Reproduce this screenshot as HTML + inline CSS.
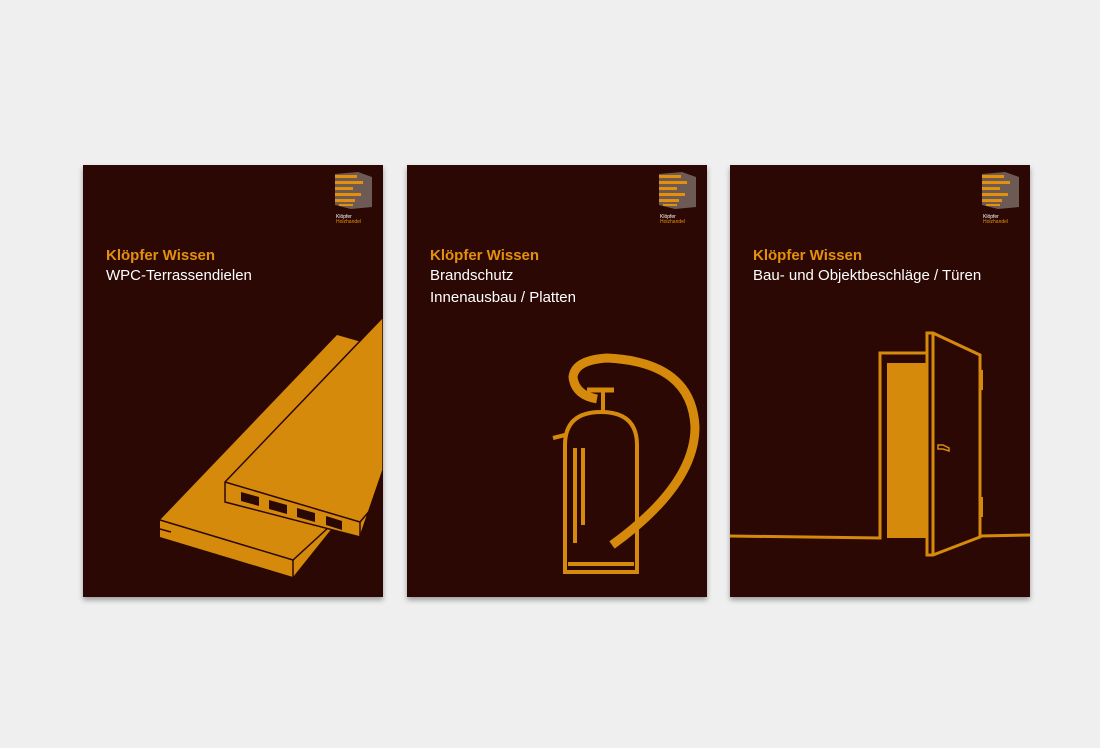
<!DOCTYPE html>
<html><head><meta charset="utf-8"><style>
body{margin:0;width:1100px;height:748px;background:#efefef;overflow:hidden;position:relative;font-family:"Liberation Sans",sans-serif}
.c{position:absolute;top:165px;width:300px;height:432px;background:#2b0803;box-shadow:0 3px 5px rgba(0,0,0,.35)}
.c svg{position:absolute;left:0;top:0}
.t{position:absolute;left:23px;font-size:15px;line-height:22px;color:#fff}
.t b{color:#e3900c;display:block;line-height:20px;margin-bottom:-1px}
</style></head><body>

<svg width="0" height="0" style="position:absolute"><defs>
<g id="logo">
<polygon points="252,9 275,7 289,12 289,42 268,44 252,40" fill="#6e5a55"/>
<g fill="#e3900c">
<rect x="252" y="10" width="22" height="3"/><rect x="252" y="16" width="28" height="3"/>
<rect x="252" y="22" width="18" height="3"/><rect x="252" y="28" width="26" height="3"/>
<rect x="252" y="34" width="20" height="3"/><rect x="256" y="39" width="14" height="2"/>
</g>
<text x="253" y="53" font-size="5" fill="#fff" font-family="Liberation Sans">Klöpfer</text>
<text x="253" y="58" font-size="5" fill="#e3900c" font-family="Liberation Sans">Holzhandel</text>
</g></defs></svg>

<div class="c" style="left:83px">
<svg width="300" height="432">
<use href="#logo"/>
<polygon points="77,355 254,170 282,178 250,362 210,412 77,372" fill="#d68a0c"/>
<polyline points="77,355 210,395 246,362" fill="none" stroke="#2b0803" stroke-width="1.5"/>
<line x1="210" y1="395" x2="210" y2="412" stroke="#2b0803" stroke-width="1.5"/>
<line x1="77" y1="364" x2="88" y2="367" stroke="#2b0803" stroke-width="1.5"/>
<polygon points="142,317 299,153 300,153 300,305 277,372 142,337" fill="#d68a0c" stroke="#2b0803" stroke-width="1.5"/>
<polyline points="142,317 277,357 300,330" fill="none" stroke="#2b0803" stroke-width="1.5"/>
<line x1="277" y1="357" x2="277" y2="372" stroke="#2b0803" stroke-width="1.5"/>
<g fill="#2b0803">
<polygon points="158,327 176,332 176,341 158,336"/>
<polygon points="186,335 204,340 204,349 186,344"/>
<polygon points="214,343 232,348 232,357 214,352"/>
<polygon points="243,351 259,356 259,365 243,360"/>
</g>
</svg>
<div class="t" style="top:81px"><b>Klöpfer Wissen</b>WPC-Terrassendielen</div>
</div>

<div class="c" style="left:407px">
<svg width="300" height="432">
<use href="#logo"/>
<g fill="none" stroke="#d68a0c">
<path d="M158,407 V280 Q158,247 194,247 Q230,247 230,280 V407 Z" stroke-width="4"/>
<line x1="161" y1="399" x2="227" y2="399" stroke-width="4"/>
<line x1="168" y1="283" x2="168" y2="378" stroke-width="4"/>
<line x1="176" y1="283" x2="176" y2="360" stroke-width="4"/>
<line x1="196" y1="247" x2="196" y2="226" stroke-width="4"/>
<line x1="180" y1="225" x2="207" y2="225" stroke-width="5"/>
<path d="M146,273 L158,270" stroke-width="4"/>
<path d="M190,234 Q168,230 166,212 Q168,195 200,193 Q285,197 288,262 Q288,320 205,380" stroke-width="9"/>
</g>
</svg>
<div class="t" style="top:81px"><b>Klöpfer Wissen</b>Brandschutz<br>Innenausbau / Platten</div>
</div>

<div class="c" style="left:730px">
<svg width="300" height="432">
<use href="#logo"/>
<rect x="157" y="198" width="40" height="175" fill="#d68a0c"/>
<g fill="none" stroke="#d68a0c" stroke-width="3">
<polyline points="0,371 150,373 150,188 197,188"/>
<polygon points="197,168 203,168 250,190 250,372 203,390 197,390"/>
<line x1="203" y1="168" x2="203" y2="390"/>
<line x1="250" y1="371" x2="300" y2="370"/>
<path d="M208,280 h5 l6,3 v3 l-6,-2 h-5 z" stroke-width="1.5"/>
</g>
<rect x="250" y="205" width="3" height="20" fill="#d68a0c"/>
<rect x="250" y="332" width="3" height="20" fill="#d68a0c"/>
</svg>
<div class="t" style="top:81px"><b>Klöpfer Wissen</b>Bau- und Objektbeschläge / Türen</div>
</div>
</body></html>
